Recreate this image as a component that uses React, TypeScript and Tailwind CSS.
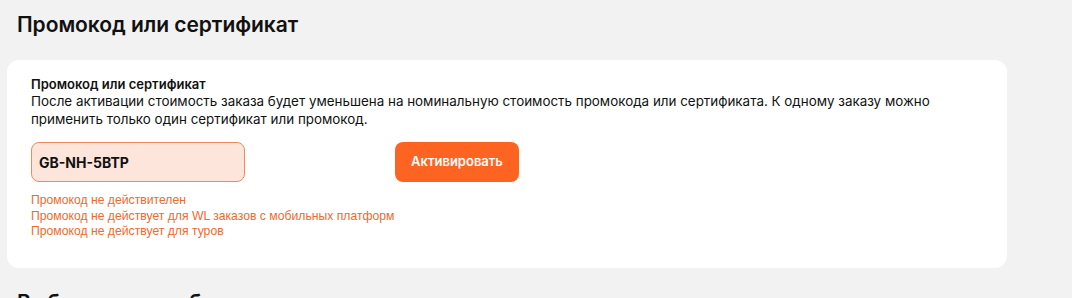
import { useState } from "react";

const errors = [
  "Промокод не действителен",
  "Промокод не действует для WL заказов с мобильных платформ",
  "Промокод не действует для туров",
];

export default function App() {
  const [code, setCode] = useState("GB-NH-5BTP");

  return (
    <div
      className="min-h-screen bg-[#f2f2f2] pt-[10px] pl-[7px] w-[1072px] h-[298px] overflow-hidden"
      style={{ fontFamily: "Inter, 'Noto Sans', sans-serif" }}
    >
      <h2 className="pl-[10px] text-[21px] leading-[30px] font-semibold text-[#111] tracking-[-0.05px]">
        Промокод или сертификат
      </h2>

      <div className="mt-[20px] w-[1000px] bg-white rounded-[12px] pt-[15px] pb-[28px] px-[24px]">
        <p className="text-[13px] leading-[18px] font-semibold text-[#111]">Промокод или сертификат</p>
        <p className="text-[13.4px] leading-[17.5px] text-[#111] max-w-[910px]">
          После активации стоимость заказа будет уменьшена на номинальную стоимость промокода или сертификата. К одному
          заказу можно применить только один сертификат или промокод.
        </p>

        <div className="mt-[14px] flex items-center">
          <input
            value={code}
            onChange={(e) => setCode(e.target.value)}
            className="w-[214px] h-[40px] rounded-[8px] border border-[#ef8a5e] bg-[#fde5dc] px-[7px] text-[14px] font-bold text-[#111] outline-none"
          />
          <button className="ml-[150px] w-[124px] h-[40px] rounded-[8px] bg-[#fd6421] text-white text-[13px] font-semibold">
            Активировать
          </button>
        </div>

        <div className="mt-[11px]" style={{ fontFamily: "'Liberation Sans', Arial, sans-serif" }}>
          {errors.map((e) => (
            <p key={e} className="text-[12.2px] leading-[15.5px] text-[#f06a2c]">
              {e}
            </p>
          ))}
        </div>
      </div>

      <h2 className="mt-[20px] pl-[10px] text-[21px] leading-[30px] font-semibold text-[#111]">
        Выберите способ оплаты
      </h2>
    </div>
  );
}
